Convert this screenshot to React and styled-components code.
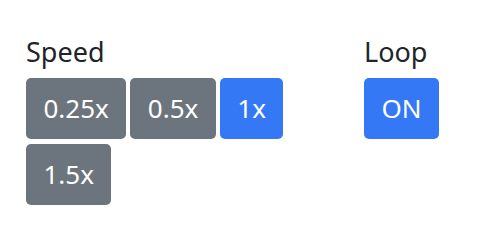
import React, { useState } from "react";
import styled, { createGlobalStyle } from "styled-components";

const GlobalStyle = createGlobalStyle`
  body {
    margin: 0;
    background: #ffffff;
    font-family: "Noto Sans", "Open Sans", sans-serif;
  }
`;

const speeds = ["0.25x", "0.5x", "1x", "1.5x"];

function App() {
  const [speed, setSpeed] = useState("1x");
  const [loop, setLoop] = useState(true);

  return (
    <>
      <GlobalStyle />
      <Panel>
        <SpeedGroup>
          <Label>Speed</Label>
          <ButtonRow>
            {speeds.map((s) => (
              <Btn key={s} active={s === speed} onClick={() => setSpeed(s)}>
                {s}
              </Btn>
            ))}
          </ButtonRow>
        </SpeedGroup>
        <Group>
          <Label>Loop</Label>
          <ButtonRow>
            <Btn active={loop} onClick={() => setLoop(!loop)}>
              {loop ? "ON" : "OFF"}
            </Btn>
          </ButtonRow>
        </Group>
      </Panel>
    </>
  );
}

export default App;

const Panel = styled.div`
  display: flex;
  align-items: flex-start;
  gap: 30px;
  padding: 33px 0 0 26px;
  height: 252px;
  box-sizing: border-box;
`;

const Group = styled.div`
  display: flex;
  flex-direction: column;
`;

const SpeedGroup = styled(Group)`
  width: 308px;
`;

const Label = styled.div`
  font-size: 27px;
  line-height: 38px;
  color: #212529;
  margin-bottom: 7px;
`;

const ButtonRow = styled.div`
  display: flex;
  flex-wrap: wrap;
  gap: 5px 4px;
`;

const Btn = styled.button.withConfig({
  shouldForwardProp: (p) => p !== "active",
})`
  height: 61px;
  padding: 0 17.5px;
  border: none;
  border-radius: 5px;
  font-family: "Noto Sans", "Open Sans", sans-serif;
  font-size: 26px;
  line-height: 61px;
  color: #ffffff;
  background: ${(p) => (p.active ? "#3478f6" : "#6c757d")};
  cursor: pointer;
`;
